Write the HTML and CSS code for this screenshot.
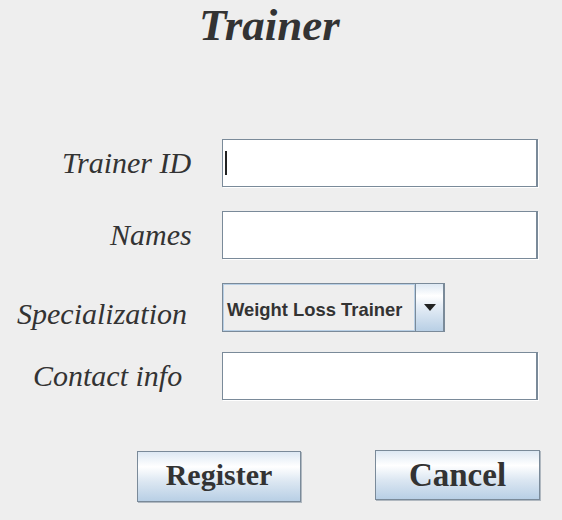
FILE: index.html
```html
<!DOCTYPE html>
<html>
<head>
<meta charset="utf-8">
<link rel="stylesheet" href="styles.css">
</head>
<body>
<div class="window">
  <h1 class="title">Trainer</h1>
  <div class="form">
    <div class="row">
      <label class="label label-id">Trainer ID</label>
      <div class="field"><span class="caret"></span></div>
    </div>
    <div class="row">
      <label class="label label-names">Names</label>
      <div class="field"></div>
    </div>
    <div class="row row-combo">
      <label class="label label-spec">Specialization</label>
      <div class="combo">
        <div class="combo-value">Weight Loss Trainer</div>
        <div class="combo-button">
          <svg width="12" height="7" viewBox="0 0 12 7"><polygon points="0,0 12,0 6,7" fill="#222"/></svg>
        </div>
      </div>
    </div>
    <div class="row row-contact">
      <label class="label label-contact">Contact info</label>
      <div class="field"></div>
    </div>
  </div>
  <div class="buttons">
    <button class="btn btn-register">Register</button>
    <button class="btn btn-cancel">Cancel</button>
  </div>
</div>
</body>
</html>
```

FILE: styles.css
```css
html, body {
  margin: 0;
  padding: 0;
  background: #eeeeee;
}

.window {
  width: 562px;
  height: 520px;
  background: #eeeeee;
  color: #333333;
  font-family: "Liberation Serif", "Times New Roman", serif;
}

.title {
  margin: 0;
  padding-left: 199px;
  font-size: 45px;
  font-weight: bold;
  font-style: italic;
  line-height: 50px;
  height: 50px;
}

.form {
  padding-top: 89px;
  display: flex;
  flex-direction: column;
}

.row {
  display: flex;
  height: 49px;
  margin-bottom: 23px;
}

.row-combo {
  margin-bottom: 20px;
}

.label {
  width: 222px;
  box-sizing: border-box;
  font-size: 30px;
  font-style: italic;
  line-height: 48px;
  white-space: nowrap;
}

.label-id { padding-left: 62px; }
.label-names { padding-left: 110px; }
.label-spec { padding-left: 17px; padding-top: 7px; }
.label-contact { padding-left: 33px; }

.field {
  width: 316px;
  height: 48px;
  box-sizing: border-box;
  background: #ffffff;
  border-top: 1px solid #7a8a99;
  border-left: 1px solid #7a8a99;
  border-right: 2px solid #7a8a99;
  border-bottom: 1px solid #7a8a99;
  box-shadow: 1px 1px 0 #ffffff;
  display: flex;
  align-items: center;
  padding-left: 2px;
}

.caret {
  display: block;
  width: 2px;
  height: 24px;
  background: #222222;
}

.combo {
  width: 223px;
  height: 49px;
  box-sizing: border-box;
  display: flex;
  border: 1px solid #7a8a99;
  background: #eeeeee;
}

.combo-value {
  flex: 1;
  border: 1px solid #b8cfe5;
  font-family: "Liberation Sans", Arial, sans-serif;
  font-weight: bold;
  font-size: 18.4px;
  color: #333333;
  display: flex;
  align-items: center;
  padding-left: 3px;
  padding-top: 5px;
  box-sizing: border-box;
}

.combo-button {
  width: 29px;
  box-sizing: border-box;
  border-left: 1px solid #7a8a99;
  border-right: 1px solid #7a8a99;
  background: linear-gradient(to bottom, #dde8f3 0%, #ffffff 25%, #e8eff7 45%, #b8cfe5 100%);
  display: flex;
  align-items: center;
  justify-content: center;
}

.buttons {
  display: flex;
  padding-top: 27px;
  padding-left: 137px;
  gap: 74px;
  align-items: flex-start;
}

.btn {
  margin: 0;
  padding: 0;
  box-sizing: border-box;
  border: 1px solid #7a8a99;
  box-shadow: 1px 1px 0 #b0b8c0;
  background: linear-gradient(to bottom, #dde8f3 0%, #ffffff 30%, #dce7f2 60%, #b8cfe5 100%);
  font-family: "Liberation Serif", "Times New Roman", serif;
  font-weight: bold;
  color: #333333;
}

.btn-register {
  width: 164px;
  height: 51px;
  font-size: 30px;
  padding-bottom: 3px;
}

.btn-cancel {
  width: 165px;
  height: 50px;
  margin-top: -1px;
  font-size: 33px;
}
```
